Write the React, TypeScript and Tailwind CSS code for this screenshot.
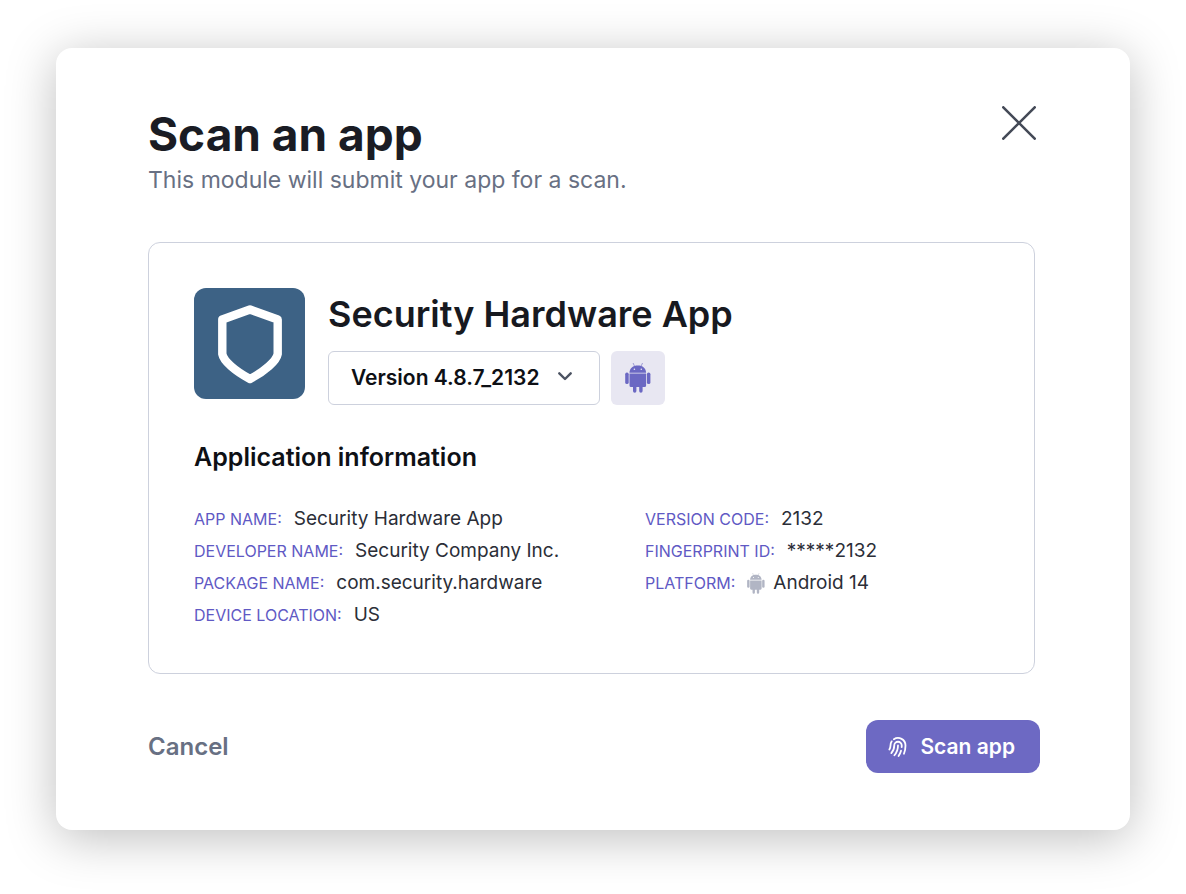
import type { ReactNode } from "react";
import { HiOutlineFingerPrint } from "react-icons/hi2";

function AndroidRobot({ className }: { className: string }) {
  return (
    <svg viewBox="0 0 26 30" fill="currentColor" aria-hidden="true" className={className}>
      <path
        fillRule="evenodd"
        d="M4.5 9.7C4.5 5 8 2.4 12.8 2.4S21.1 5 21.1 9.7ZM8.6 6.3a.8.8 0 1 0 1.6 0a.8.8 0 1 0-1.6 0ZM15.5 6.3a.8.8 0 1 0 1.6 0a.8.8 0 1 0-1.6 0Z"
      />
      <path d="M8.2.3 9.4 2.9M17.4.3 16.2 2.9" stroke="currentColor" strokeWidth="0.6" strokeLinecap="round" />
      <path d="M4.5 10.5H21.1V22.4a1.5 1.5 0 0 1-1.5 1.5H17.6V28a1.7 1.7 0 0 1-3.4 0V23.9H11.4V28a1.7 1.7 0 0 1-3.4 0V23.9H6a1.5 1.5 0 0 1-1.5-1.5Z" />
      <rect x="0.2" y="9.6" width="3.5" height="11.5" rx="1.7" />
      <rect x="21.9" y="9.6" width="3.5" height="11.5" rx="1.7" />
    </svg>
  );
}

function ShieldLogo() {
  return (
    <svg viewBox="0 0 111 111" fill="none" aria-hidden="true" className="size-[111px] shrink-0 rounded-xl bg-[#3d6285]">
      <path
        d="M56 21.5 83.7 31.5V66C82.5 73 71 83 56 91C41 83 29.5 73 28.3 66V31.5Z"
        stroke="#fff"
        strokeWidth="8.4"
        strokeLinejoin="round"
      />
    </svg>
  );
}

function InfoRow({ label, children }: { label: string; children: ReactNode }) {
  return (
    <div className="flex items-center gap-3">
      <dt className="text-base leading-8 text-[#6059c4]">{label}:</dt>
      <dd className="flex items-center gap-2 text-[19px] leading-8 text-[#2b2e37]">{children}</dd>
    </div>
  );
}

export default function App() {
  return (
    <div className="min-h-screen bg-white px-14 py-12 font-['Inter',sans-serif]">
      <main
        role="dialog"
        aria-labelledby="dialog-title"
        className="rounded-2xl bg-white pt-14 pr-[90px] pb-[57px] pl-[92px] shadow-[0_8px_50px_rgba(0,0,0,0.26)]"
      >
        <header className="flex items-start justify-between pr-1">
          <div>
            <h1 id="dialog-title" className="text-[46px] leading-[60px] font-bold text-[#1a1c24]">
              Scan an app
            </h1>
            <p className="text-[23px] leading-8 text-[#687083]">This module will submit your app for a scan.</p>
          </div>
          <button type="button" aria-label="Close" className="mt-0.5 text-[#444a57]">
            <svg viewBox="0 0 34 34" className="size-[34px]" fill="none" stroke="currentColor" strokeWidth="2.6" strokeLinecap="round">
              <path d="M1.3 1.3 32.7 32.7M32.7 1.3 1.3 32.7" />
            </svg>
          </button>
        </header>

        <section className="mt-[46px] mr-[5px] rounded-xl border border-[#cdd1dd] px-[45px] pt-[45px] pb-[42px]">
          <div className="flex items-start gap-[23px]">
            <ShieldLogo />
            <div className="pt-1.5">
              <h2 className="text-4xl leading-10 font-semibold text-[#171920]">Security Hardware App</h2>
              <div className="mt-[17px] flex gap-[11px]">
                <div className="grid items-center">
                  <select
                    aria-label="Version"
                    defaultValue="4.8.7_2132"
                    className="col-start-1 row-start-1 h-[54px] w-[272px] appearance-none rounded-md border border-[#cdd1dd] bg-white pr-12 pl-[22px] text-[21px] font-semibold text-[#0e1015]"
                  >
                    <option value="4.8.7_2132">Version 4.8.7_2132</option>
                  </select>
                  <svg
                    viewBox="0 0 14 9"
                    aria-hidden="true"
                    className="pointer-events-none col-start-1 row-start-1 mr-7 mb-1 h-[9px] w-3.5 justify-self-end"
                    fill="none"
                    stroke="#4c5362"
                    strokeWidth="2.4"
                    strokeLinecap="round"
                    strokeLinejoin="round"
                  >
                    <path d="M1.3 1.3 7 7 12.7 1.3" />
                  </svg>
                </div>
                <div className="flex size-[54px] items-center justify-center rounded-md bg-[#e8e7f2] text-[#6b68c3]">
                  <AndroidRobot className="h-[30px] w-[26px]" />
                </div>
              </div>
            </div>
          </div>

          <h3 className="mt-9 text-[25px] leading-8 font-semibold text-[#0e1015]">Application information</h3>
          <div className="mt-[30px] grid grid-cols-[451fr_344fr]">
            <dl>
              <InfoRow label="APP NAME">Security Hardware App</InfoRow>
              <InfoRow label="DEVELOPER NAME">Security Company Inc.</InfoRow>
              <InfoRow label="PACKAGE NAME">com.security.hardware</InfoRow>
              <InfoRow label="DEVICE LOCATION">US</InfoRow>
            </dl>
            <dl>
              <InfoRow label="VERSION CODE">2132</InfoRow>
              <InfoRow label="FINGERPRINT ID">*****2132</InfoRow>
              <InfoRow label="PLATFORM">
                <AndroidRobot className="h-[21px] w-[18px] text-[#b1b5c4]" />
                Android 14
              </InfoRow>
            </dl>
          </div>
        </section>

        <footer className="mt-[46px] flex items-center justify-between">
          <button type="button" className="text-2xl leading-8 font-semibold text-[#687083]">
            Cancel
          </button>
          <button
            type="button"
            className="flex h-[53px] items-center gap-2.5 rounded-xl bg-[#6d69c3] pr-[25px] pl-5 text-[21px] font-semibold text-white"
          >
            <HiOutlineFingerPrint aria-hidden="true" className="size-6 stroke-[1.8]" />
            Scan app
          </button>
        </footer>
      </main>
    </div>
  );
}
